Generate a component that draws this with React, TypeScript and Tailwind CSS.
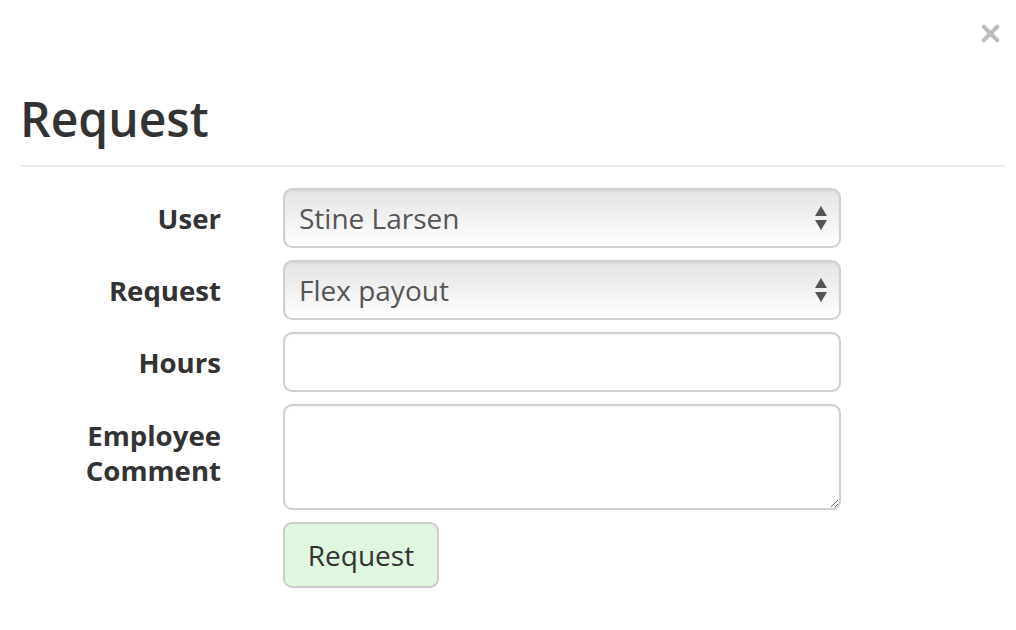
import { X } from "lucide-react";

const font = { fontFamily: '"Open Sans", "DejaVu Sans", sans-serif' };

function Arrows() {
  return (
    <svg width="14" height="26" viewBox="0 0 14 26" className="pointer-events-none absolute right-[13px] top-1/2 -translate-y-1/2">
      <polygon points="7,1 13,11 1,11" fill="#555" />
      <polygon points="1,15 13,15 7,25" fill="#555" />
    </svg>
  );
}

function FakeSelect({ value }: { value: string }) {
  return (
    <div className="relative w-[558px] h-[60px]">
      <select
        defaultValue={value}
        className="h-full w-full appearance-none rounded-[9px] border-2 border-[#d0d0d0] bg-gradient-to-b from-[#e4e4e4] to-white pl-[14px] pr-10 text-[28px] text-[#555] shadow-[inset_0_1px_2px_rgba(0,0,0,0.08)] outline-none"
      >
        <option>{value}</option>
      </select>
      <Arrows />
    </div>
  );
}

function Row({ label, children, top = false }: { label: React.ReactNode; children: React.ReactNode; top?: boolean }) {
  return (
    <div className={`flex ${top ? "items-start" : "items-center"} gap-[62px]`}>
      <div className={`w-[201px] text-right text-[27.6px] font-bold leading-[35px] text-[#333] ${top ? "pt-[14px]" : ""}`}>{label}</div>
      {children}
    </div>
  );
}

export default function App() {
  return (
    <div className="h-[630px] w-[1016px] bg-white" style={font}>
      <div className="flex justify-end pr-[12px] pt-[20px]">
        <X className="h-[27px] w-[27px] text-[#bdbdbd]" strokeWidth={3.6} />
      </div>
      <div className="px-[20px]">
        <h1 className="mt-[42px] pb-[16px] text-[48px] font-semibold leading-[60px] text-[#333]">Request</h1>
        <div className="h-[2px] w-[985px] bg-[#ececec]" />
        <div className="mt-[21px] flex flex-col gap-[12px]">
          <Row label="User">
            <FakeSelect value="Stine Larsen" />
          </Row>
          <Row label="Request">
            <FakeSelect value="Flex payout" />
          </Row>
          <Row label="Hours">
            <input className="h-[60px] w-[558px] rounded-[9px] border-2 border-[#d0d0d0] bg-white px-[14px] text-[28px] text-[#555] shadow-[inset_0_1px_2px_rgba(0,0,0,0.06)] outline-none" />
          </Row>
          <Row label={<>Employee<br />Comment</>} top>
            <textarea className="h-[106px] w-[558px] rounded-[9px] border-2 border-[#d0d0d0] bg-white px-[14px] py-2 text-[28px] text-[#555] shadow-[inset_0_1px_2px_rgba(0,0,0,0.06)] outline-none" />
          </Row>
          <div className="flex gap-[62px]">
            <div className="w-[201px]" />
            <button className="h-[66px] w-[156px] rounded-[9px] border-2 border-[#cccccc] bg-[#dff6df] text-[28px] text-[#333]">Request</button>
          </div>
        </div>
      </div>
    </div>
  );
}
